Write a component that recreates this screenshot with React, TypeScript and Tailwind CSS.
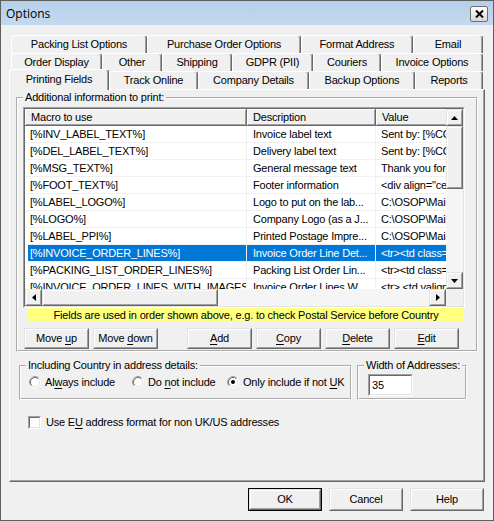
import React from "react";

type TabDef = { label: string; w: string };

const row1: TabDef[] = [
  { label: "Packing List Options", w: "w-[136px]" },
  { label: "Purchase Order Options", w: "w-[154px]" },
  { label: "Format Address", w: "w-[112px]" },
  { label: "Email", w: "w-[70px]" },
];
const row2: TabDef[] = [
  { label: "Order Display", w: "w-[91px]" },
  { label: "Other", w: "w-[60px]" },
  { label: "Shipping", w: "w-[70px]" },
  { label: "GDPR (PII)", w: "w-[81px]" },
  { label: "Couriers", w: "w-[68px]" },
  { label: "Invoice Options", w: "w-[102px]" },
];
const row3: TabDef[] = [
  { label: "Track Online", w: "w-[89px]" },
  { label: "Company Details", w: "w-[111px]" },
  { label: "Backup Options", w: "w-[106px]" },
  { label: "Reports", w: "w-[68px]" },
];

const rows: [string, string, string][] = [
  ["[%INV_LABEL_TEXT%]", "Invoice label text", "Sent by: [%COMPANY%]"],
  ["[%DEL_LABEL_TEXT%]", "Delivery label text", "Sent by: [%COMPANY%]"],
  ["[%MSG_TEXT%]", "General message text", "Thank you for your order"],
  ["[%FOOT_TEXT%]", "Footer information", '<div align="center">'],
  ["[%LABEL_LOGO%]", "Logo to put on the lab...", "C:\\OSOP\\Main\\logo.jpg"],
  ["[%LOGO%]", "Company Logo (as a J...", "C:\\OSOP\\Main\\logo.jpg"],
  ["[%LABEL_PPI%]", "Printed Postage Impre...", "C:\\OSOP\\Main\\ppi.jpg"],
  ["[%INVOICE_ORDER_LINES%]", "Invoice Order Line Det...", '<tr><td class="line">'],
  ["[%PACKING_LIST_ORDER_LINES%]", "Packing List Order Lin...", '<tr><td class="line">'],
  ["[%INVOICE_ORDER_LINES_WITH_IMAGES%]", "Invoice Order Lines W...", '<tr> <td valign="top">'],
];

function Tab({ t }: { t: TabDef }) {
  return (
    <div
      className={`${t.w} h-full flex items-center justify-center border-l border-t border-r border-l-white border-t-white border-r-[#696969] rounded-t-[3px] shadow-[inset_-1px_0_0_#a0a0a0] whitespace-nowrap`}
    >
      {t.label}
    </div>
  );
}

function Raised({ className, children }: { className: string; children?: React.ReactNode }) {
  return (
    <div className={`${className} border border-t-[#e3e3e3] border-l-[#e3e3e3] border-r-[#696969] border-b-[#696969] bg-[#f0f0f0]`}>
      <div className="w-full h-full border border-t-white border-l-white border-r-[#a0a0a0] border-b-[#a0a0a0] flex items-center justify-center">
        {children}
      </div>
    </div>
  );
}

function Btn({ className, children, def }: { className: string; children: React.ReactNode; def?: boolean }) {
  const label = <span className="whitespace-nowrap">{children}</span>;
  if (def) {
    return (
      <div className={`${className} border border-black`}>
        <Raised className="w-full h-full">{label}</Raised>
      </div>
    );
  }
  return <Raised className={className}>{label}</Raised>;
}

function U({ children }: { children: React.ReactNode }) {
  return <span className="underline underline-offset-[2px]">{children}</span>;
}

function Arrow({ dir }: { dir: "up" | "down" | "left" | "right" }) {
  if (dir === "up")
    return (
      <svg width="7" height="4" viewBox="0 0 7 4">
        <polygon points="0,4 7,4 3.5,0" fill="#000" />
      </svg>
    );
  if (dir === "down")
    return (
      <svg width="7" height="4" viewBox="0 0 7 4">
        <polygon points="0,0 7,0 3.5,4" fill="#000" />
      </svg>
    );
  if (dir === "left")
    return (
      <svg width="4" height="7" viewBox="0 0 4 7">
        <polygon points="4,0 4,7 0,3.5" fill="#000" />
      </svg>
    );
  return (
    <svg width="4" height="7" viewBox="0 0 4 7">
      <polygon points="0,0 0,7 4,3.5" fill="#000" />
    </svg>
  );
}

function Radio({ checked }: { checked?: boolean }) {
  return (
    <svg width="12" height="12" viewBox="0 0 12 12" className="shrink-0">
      <circle cx="6" cy="6" r="4.5" fill="#fff" />
      <path d="M2.11 9.89 A5.5 5.5 0 0 1 9.89 2.11" stroke="#a0a0a0" fill="none" />
      <path d="M9.89 2.11 A5.5 5.5 0 0 1 2.11 9.89" stroke="#fff" fill="none" />
      <path d="M2.82 9.18 A4.5 4.5 0 0 1 9.18 2.82" stroke="#696969" fill="none" />
      <path d="M9.18 2.82 A4.5 4.5 0 0 1 2.82 9.18" stroke="#e3e3e3" fill="none" />
      {checked && <circle cx="6" cy="6" r="2" fill="#000" />}
    </svg>
  );
}

function Sunken({ className, children }: { className: string; children?: React.ReactNode }) {
  return (
    <div className={`${className} border border-t-[#a0a0a0] border-l-[#a0a0a0] border-r-white border-b-white`}>
      <div className="w-full h-full border border-t-[#696969] border-l-[#696969] border-r-[#e3e3e3] border-b-[#e3e3e3] bg-white">
        {children}
      </div>
    </div>
  );
}

function ListView() {
  return (
    <Sunken className="ml-[5px] mt-[3px] w-[442px] h-[201px]">
      <div className="w-full h-full flex flex-col">
        <div className="flex flex-1 min-h-0">
          <div className="flex-1 min-w-0 overflow-hidden">
            <div className="flex h-[17px] w-[560px]">
              <div className="w-[222px] h-full flex items-center pl-[6px] bg-[#f0f0f0] border-r border-b border-r-[#696969] border-b-[#696969] shadow-[inset_1px_1px_0_#fff,inset_-1px_-1px_0_#a0a0a0]">
                Macro to use
              </div>
              <div className="w-[129px] h-full flex items-center pl-[6px] bg-[#f0f0f0] border-r border-b border-r-[#696969] border-b-[#696969] shadow-[inset_1px_1px_0_#fff,inset_-1px_-1px_0_#a0a0a0]">
                Description
              </div>
              <div className="w-[120px] h-full flex items-center pl-[6px] bg-[#f0f0f0] border-r border-b border-r-[#696969] border-b-[#696969] shadow-[inset_1px_1px_0_#fff,inset_-1px_-1px_0_#a0a0a0]">
                Value
              </div>
            </div>
            {rows.map((r, i) => {
              const sel = i === 7;
              const cell = sel ? "bg-[#0078d7] text-white" : "";
              return (
                <div key={i} className="flex h-[17px] w-[560px] border-b border-[#f0f0f0]">
                  <div className="w-[222px] h-full border-r border-[#f0f0f0] pl-[3px]">
                    <div className={`h-full flex items-center pl-[2px] whitespace-nowrap overflow-hidden ${cell}`}>{r[0]}</div>
                  </div>
                  <div className={`w-[129px] h-full border-r border-[#f0f0f0] flex items-center pl-[6px] whitespace-nowrap overflow-hidden ${cell}`}>
                    {r[1]}
                  </div>
                  <div className={`w-[120px] h-full flex items-center pl-[5px] whitespace-nowrap overflow-hidden ${cell}`}>
                    {r[2]}
                  </div>
                </div>
              );
            })}
          </div>
          <div className="w-[17px] flex flex-col bg-[#f5f5f5]">
            <Raised className="h-[17px] w-full">
              <Arrow dir="up" />
            </Raised>
            <Raised className="h-[63px] w-full" />
            <div className="flex-1" />
            <Raised className="h-[17px] w-full">
              <Arrow dir="down" />
            </Raised>
          </div>
        </div>
        <div className="flex h-[17px]">
          <div className="flex-1 flex bg-[#f5f5f5]">
            <Raised className="w-[17px] h-full">
              <Arrow dir="left" />
            </Raised>
            <Raised className="w-[176px] h-full" />
            <div className="flex-1" />
            <Raised className="w-[17px] h-full">
              <Arrow dir="right" />
            </Raised>
          </div>
          <div className="w-[17px] h-full bg-[#f0f0f0]" />
        </div>
      </div>
    </Sunken>
  );
}

export default function App() {
  return (
    <div className="w-[494px] h-[521px] border border-[#5f5f5f] bg-[#f0f0f0] flex flex-col font-['Liberation_Sans',Arial,sans-serif] text-[11px] leading-[13px] tracking-[-0.2px] text-black overflow-hidden">
      {/* Title bar */}
      <div className="h-[24px] shrink-0 flex items-center justify-between pl-[5px] pr-[5px] bg-linear-to-b from-[#b6cfe9] to-[#c3d9ef]">
        <span className="font-['Open_Sans',sans-serif] text-[12px] tracking-normal">Options</span>
        <div className="w-[18px] h-[16px] mt-[2px] border border-[#6f6f6f] rounded-[2px] bg-linear-to-b from-white to-[#d8d8d8] flex items-center justify-center">
          <svg width="9" height="8" viewBox="0 0 9 8">
            <path d="M1 0.5 L8 7.5 M8 0.5 L1 7.5" stroke="#000" strokeWidth="2" />
          </svg>
        </div>
      </div>

      {/* Tabs */}
      <div className="pt-[10px] pl-[10px] shrink-0">
        <div className="flex h-[18px]">
          {row1.map((t) => (
            <Tab key={t.label} t={t} />
          ))}
        </div>
        <div className="flex h-[18px]">
          {row2.map((t) => (
            <Tab key={t.label} t={t} />
          ))}
        </div>
        <div className="flex h-[18px]">
          <div className="relative z-10 -ml-[2px] -mt-[2px] w-[100px] h-[21px] bg-[#f0f0f0] flex items-center justify-center border-l border-t border-r border-l-white border-t-white border-r-[#696969] rounded-t-[3px] shadow-[inset_-1px_0_0_#a0a0a0] pb-[2px]">
            Printing Fields
          </div>
          {row3.map((t) => (
            <Tab key={t.label} t={t} />
          ))}
        </div>
      </div>

      {/* Panel */}
      <div className="ml-[8px] w-[476px] h-[393px] shrink-0 border border-t-white border-l-white border-r-[#696969] border-b-[#696969]">
        <div className="w-full h-full border-r border-b border-r-[#a0a0a0] border-b-[#a0a0a0] px-[6px] flex flex-col">
          <fieldset className="mt-[1px] w-[462px] border-2 border-white [border-style:groove] pb-[1px]">
            <legend className="ml-[5px] px-[2px] leading-[13px]">Additional information to print:</legend>
            <ListView />
            <div className="ml-[10px] w-[436px] h-[14px] bg-[#ffff80] flex items-center justify-center whitespace-nowrap">
              Fields are used in order shown above, e.g. to check Postal Service before Country
            </div>
            <div className="flex ml-[6px] mt-[6px]">
              <Btn className="w-[65px] h-[21px]">
                Move <U>u</U>p
              </Btn>
              <Btn className="w-[65px] h-[21px] ml-[4px]">
                Move <U>d</U>own
              </Btn>
              <Btn className="w-[65px] h-[21px] ml-[29px]">
                <U>A</U>dd
              </Btn>
              <Btn className="w-[65px] h-[21px] ml-[4px]">
                <U>C</U>opy
              </Btn>
              <Btn className="w-[65px] h-[21px] ml-[4px]">
                <U>D</U>elete
              </Btn>
              <Btn className="w-[65px] h-[21px] ml-[4px]">
                <U>E</U>dit
              </Btn>
            </div>
          </fieldset>

          <div className="flex mt-[7px]">
            <fieldset className="ml-[3px] w-[333px] border-2 border-white [border-style:groove] pb-[9px]">
              <legend className="ml-[5px] px-[2px] leading-[13px]">Including Country in address details:</legend>
              <div className="flex h-[14px] mt-[3px] items-center ml-[8px]">
                <div className="w-[103px] flex items-center gap-[4px]">
                  <Radio />
                  <span>
                    Al<U>w</U>ays include
                  </span>
                </div>
                <div className="w-[95px] flex items-center gap-[4px]">
                  <Radio />
                  <span>
                    Do <U>n</U>ot include
                  </span>
                </div>
                <div className="flex items-center gap-[4px]">
                  <Radio checked />
                  <span>
                    Only include if not <U>U</U>K
                  </span>
                </div>
              </div>
            </fieldset>
            <fieldset className="ml-[5px] w-[110px] border-2 border-white [border-style:groove] pb-[2px]">
              <legend className="ml-[5px] px-[2px] leading-[13px]">Width of Addresses:</legend>
              <Sunken className="ml-[9px] mt-[2px] w-[45px] h-[22px]">
                <div className="pl-[2px] pt-[3px]">35</div>
              </Sunken>
            </fieldset>
          </div>

          <div className="flex items-center ml-[12px] mt-[16px]">
            <Sunken className="w-[13px] h-[13px]" />
            <span className="ml-[5px]">
              Use E<U>U</U> address format for non UK/US addresses
            </span>
          </div>
        </div>
      </div>

      {/* Bottom buttons */}
      <div className="flex justify-end mt-[6px] mr-[9px] gap-[7px]">
        <Btn className="w-[74px] h-[23px]" def>
          OK
        </Btn>
        <Btn className="w-[74px] h-[23px]">Cancel</Btn>
        <Btn className="w-[74px] h-[23px]">Help</Btn>
      </div>
    </div>
  );
}
